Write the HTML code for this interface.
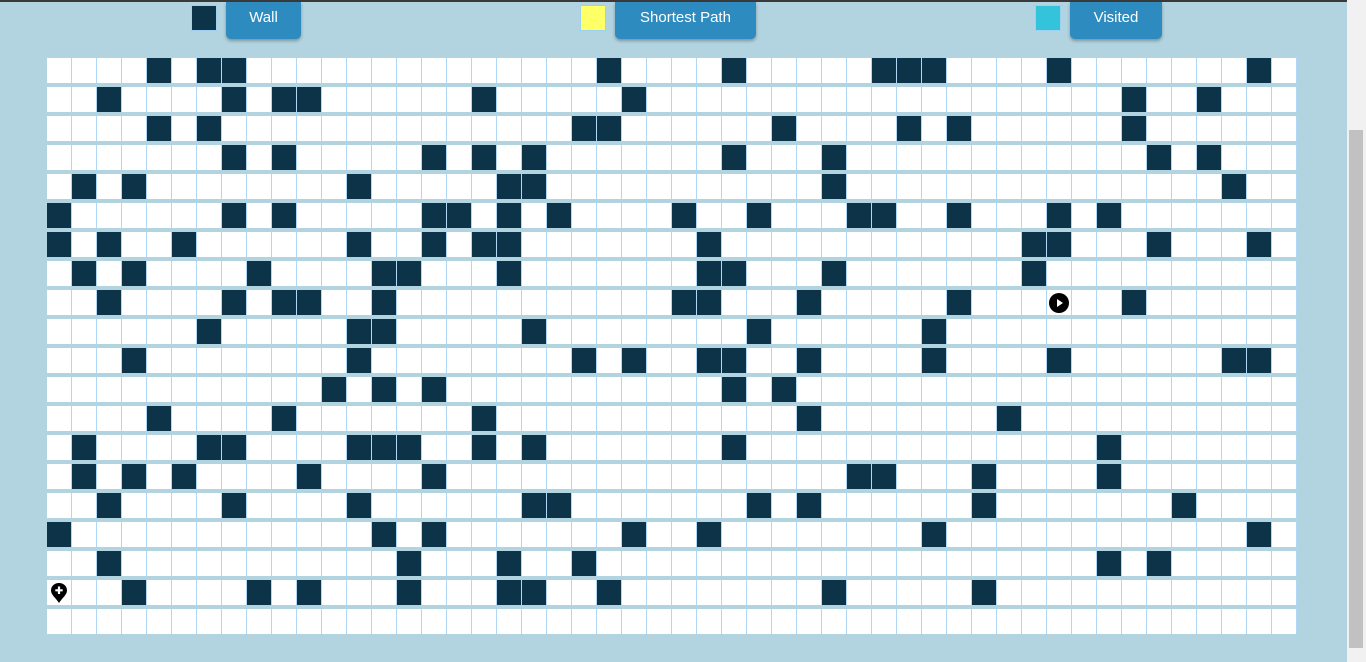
<!DOCTYPE html>
<html><head><meta charset="utf-8">
<style>
body{margin:0;width:1366px;height:662px;background:#b2d4e0;overflow:hidden;position:relative;font-family:"Liberation Sans",sans-serif}
.top{position:absolute;left:0;top:0;width:1366px;height:2px;background:#3a3a3a}
.sw{position:absolute;top:5px;width:24px;height:24px;border:1px solid #9fd0f0}
.btn{position:absolute;top:2px;height:37px;background:#2e8bc0;color:#fff;font-size:15px;line-height:31px;text-align:center;border-radius:0 0 5px 5px;box-shadow:0 2px 3px rgba(0,0,0,.3)}
.sb{position:absolute;left:1347px;top:0;width:19px;height:662px;background:#f1f1f1}
.th{position:absolute;left:1349px;top:130px;width:14px;height:518px;background:#c1c1c1}
#g{position:absolute;left:47px;top:58px}
.r{display:flex;height:25px;margin-bottom:4px}
.c{width:24px;height:25px;background:#fff;border-right:1px solid #afd8f8;position:relative}
.c:first-child{width:24px}
.w{background:#0c3347}
</style></head><body>
<div class="top"></div>
<div class="sw" style="left:191px;background:#0c3347"></div>
<div class="btn" style="left:226px;width:75px">Wall</div>
<div class="sw" style="left:580px;background:#ffff66"></div>
<div class="btn" style="left:615px;width:141px">Shortest Path</div>
<div class="sw" style="left:1035px;background:#33c4db"></div>
<div class="btn" style="left:1070px;width:92px">Visited</div>
<div id="g"></div>
<div class="sb"></div><div class="th"></div>
<script>
var W=[[4,6,7,22,27,33,34,35,40,48],[2,7,9,10,17,23,43,46],[4,6,21,22,29,34,36,43],[7,9,15,17,19,27,31,44,46],[1,3,12,18,19,31,47],[0,7,9,15,16,18,20,25,28,32,33,36,40,42],[0,2,5,12,15,17,18,26,39,40,44,48],[1,3,8,13,14,18,26,27,31,39],[2,7,9,10,13,25,26,30,36,43],[6,12,13,19,28,35],[3,12,21,23,26,27,30,35,40,47,48],[11,13,15,27,29],[4,9,17,30,38],[1,6,7,12,13,14,17,19,27,42],[1,3,5,10,15,32,33,37,42],[2,7,12,19,20,28,30,37,45],[0,13,15,23,26,35,48],[2,14,18,21,42,44],[3,8,10,14,18,19,22,31,37],[]];
var h='';
for(var r=0;r<20;r++){h+='<div class="r">';for(var c=0;c<50;c++){var w=W[r].indexOf(c)>=0;var inner='';
if(r==8&&c==40)inner='<svg width="24" height="25" style="position:absolute;left:0;top:0"><circle cx="12" cy="13" r="10" fill="#000"/><path d="M10 9 L16 13 L10 17Z" fill="#fff"/></svg>';
if(r==18&&c==0)inner='<svg width="24" height="25" style="position:absolute;left:0;top:0"><path d="M12 3 C7 3 4 6.5 4 10.5 C4 15 9 18 12 23 C15 18 20 15 20 10.5 C20 6.5 17 3 12 3Z" fill="#000"/><path d="M12 6.5 V14 M8.3 10.3 H15.7" stroke="#fff" stroke-width="2.2"/></svg>';
h+='<div class="c'+(w?' w':'')+'">'+inner+'</div>';}h+='</div>';}
document.getElementById('g').innerHTML=h;
</script>
</body></html>
